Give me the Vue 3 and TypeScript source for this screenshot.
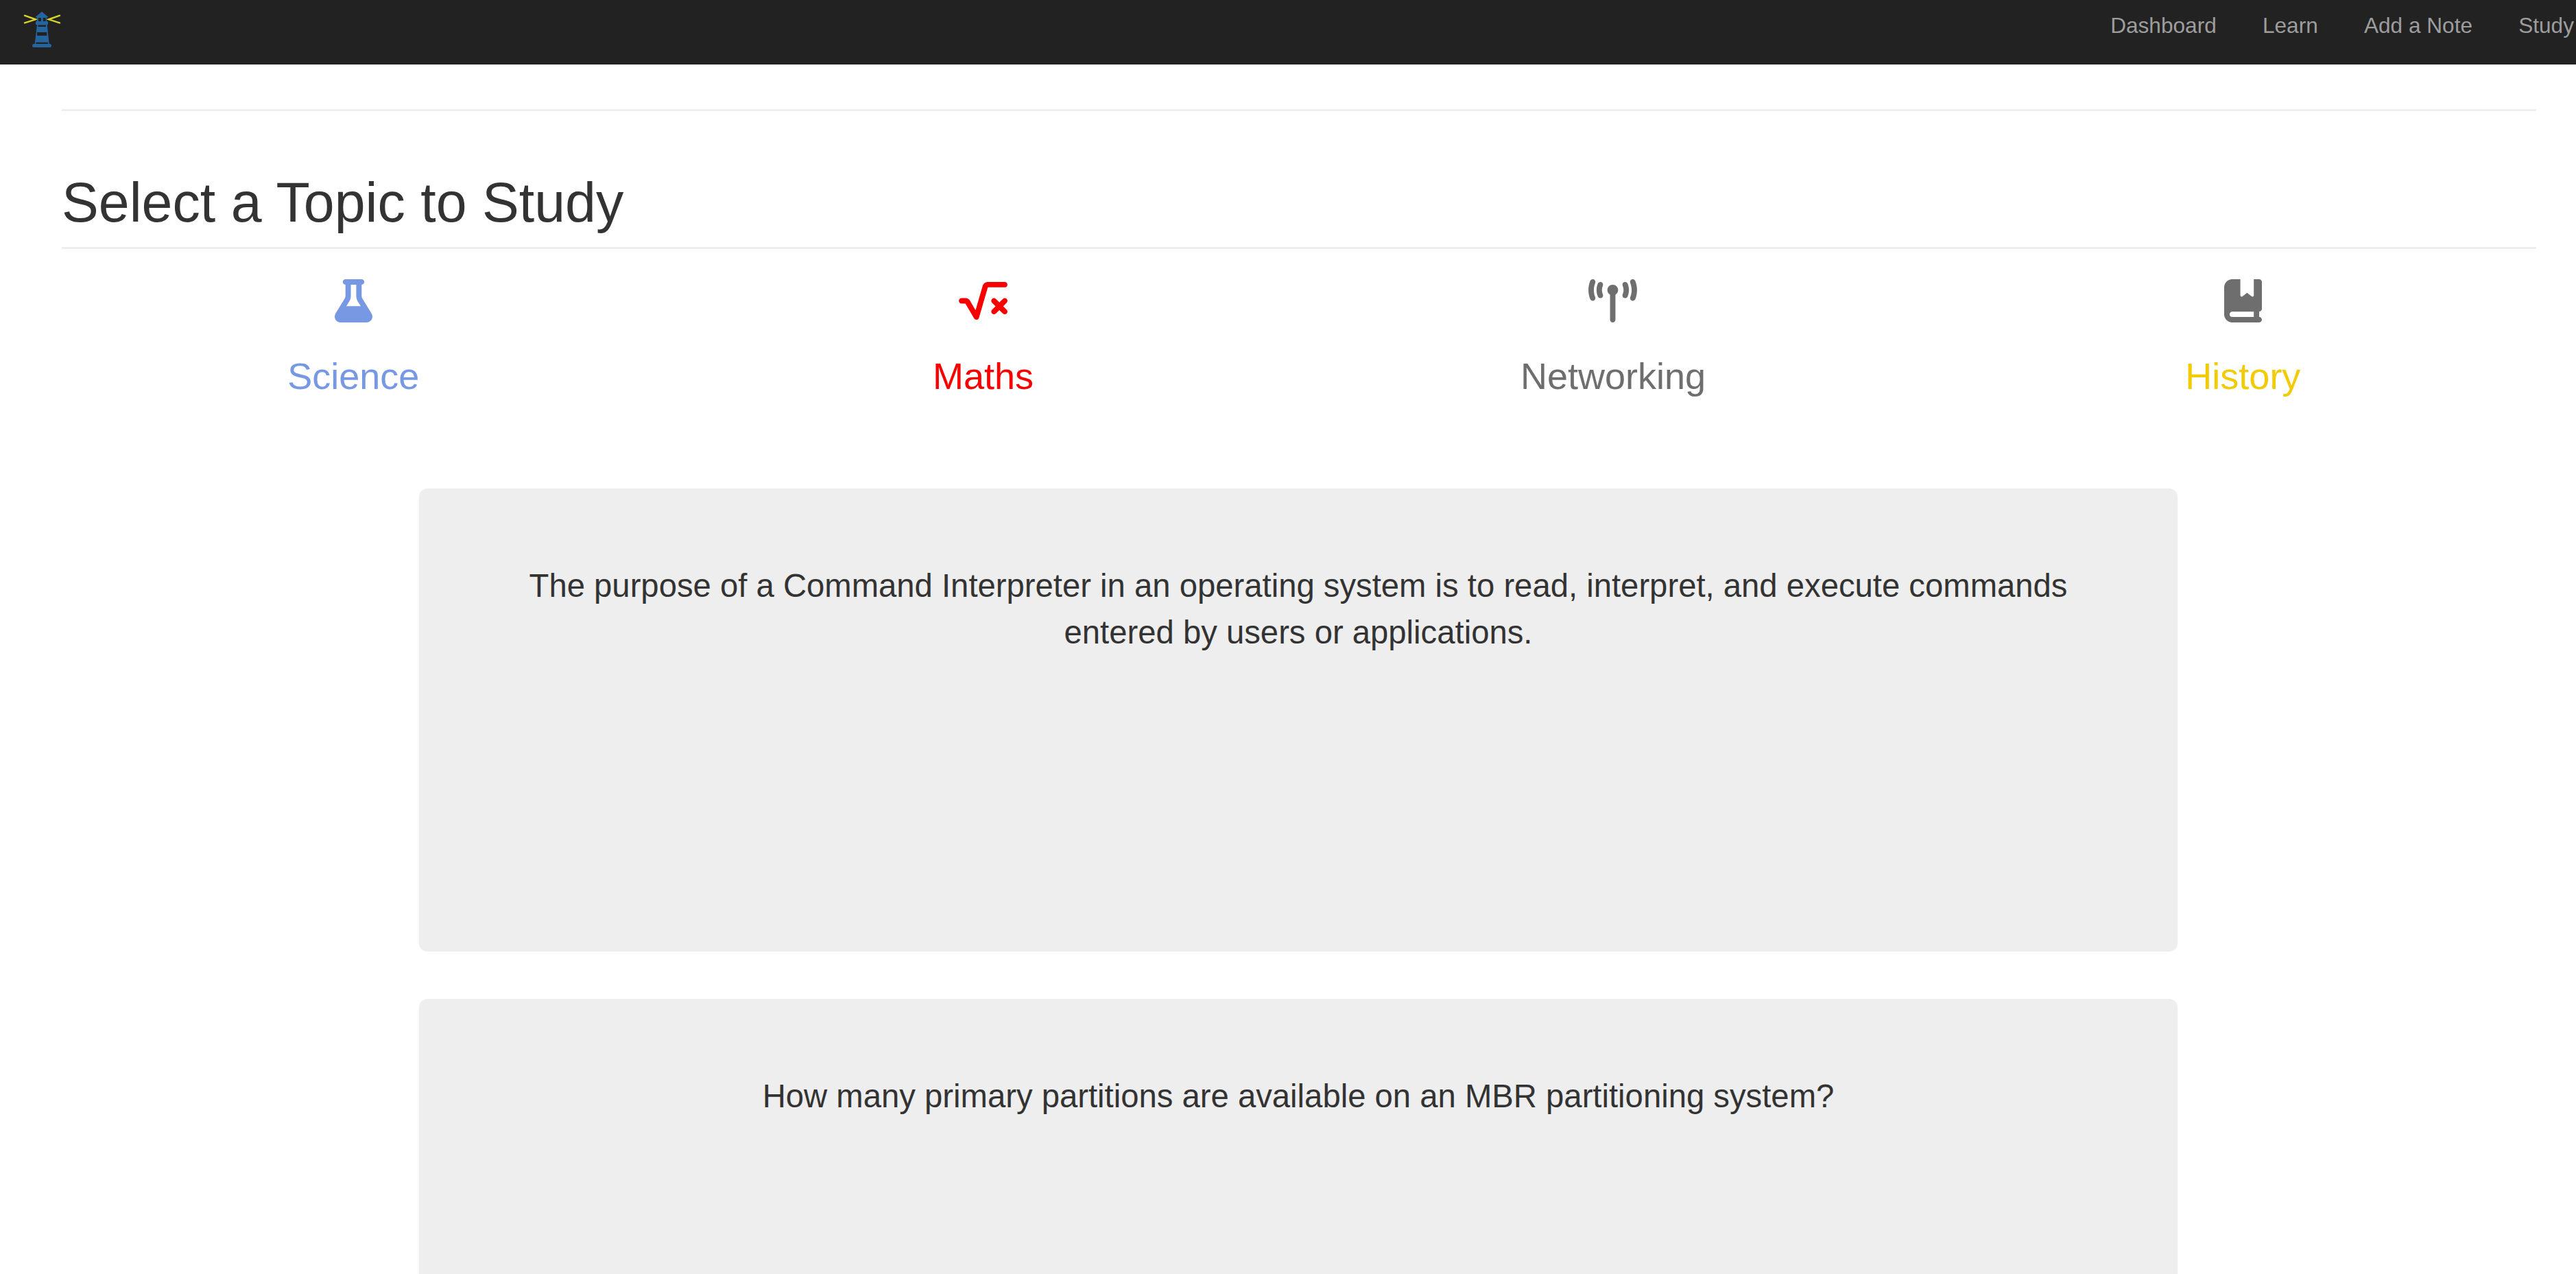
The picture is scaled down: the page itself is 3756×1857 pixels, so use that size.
<template>
  <div class="page">
    <!-- Top navbar -->
    <nav class="navbar">
      <svg class="logo" viewBox="0 0 84 72" width="84" height="72">
        <path class="rays" d="M9 13.7 L25 19.3 L9 24.3 M60 13.7 L44 19.3 L60 24.3" />
        <path class="tower" d="M34 8 L25 15.5 L25 16.5 L27 16.5 L27 22 L26 22 Q25 22 25 23 L25 26 Q25 27 26 27 L27 27 L23.7 55 L22 55 Q20 55 20 57.5 Q20 60 22 60 L46 60 Q48 60 48 57.5 Q48 55 46 55 L44.7 55 L41.7 27 L42 27 Q43 27 43 26 L43 23 Q43 22 42 22 L41 22 L41 16.5 L43 16.5 L43 15.5 Z" />
        <path class="gaps" d="M29 17 H33 V22 H29 Z M35.7 17 H39.7 V22 H35.7 Z M28.5 27.5 H40 V30 H28.5 Z M27 38 H41.3 V43 H27 Z M25.3 52.7 H43 V55 H25.3 Z" />
      </svg>
      <ul class="nav-links">
        <li v-for="link in navLinks" :key="link"><a href="#">{{ link }}</a></li>
      </ul>
    </nav>

    <main class="content">
      <hr class="rule" />
      <h1 class="page-title">Select a Topic to Study</h1>

      <div class="topics">
        <a v-for="topic in topics" :key="topic.name" href="#" class="topic" :style="{ color: topic.color }">
          <svg class="topic-icon" :viewBox="topic.viewBox" :width="topic.width" height="63">
            <path :d="topic.path" :fill="topic.iconColor" />
          </svg>
          <span class="topic-name">{{ topic.name }}</span>
        </a>
      </div>
    </main>

    <!-- Flashcards -->
    <section class="cards">
      <div v-for="card in cards" :key="card" class="card">
        <p>{{ card }}</p>
      </div>
    </section>
  </div>
</template>

<script setup lang="ts">
const navLinks: string[] = ['Dashboard', 'Learn', 'Add a Note', 'Study']

interface Topic {
  name: string
  color: string
  iconColor: string
  viewBox: string
  width: number
  path: string
}

const topics: Topic[] = [
  {
    name: 'Science',
    color: '#7799e3',
    iconColor: '#7799e3',
    viewBox: '0 0 448 512',
    width: 55,
    path: 'M288 0H160 128C110.3 0 96 14.3 96 32s14.3 32 32 32V196.8c0 11.8-3.3 23.5-9.5 33.5L10.3 406.2C3.6 417.2 0 429.7 0 442.6C0 480.9 31.1 512 69.4 512H378.6c38.3 0 69.4-31.1 69.4-69.4c0-12.8-3.6-25.4-10.3-36.4L329.5 230.4c-6.2-10.1-9.5-21.7-9.5-33.5V64c17.7 0 32-14.3 32-32s-14.3-32-32-32H288zM192 196.8V64h64V196.8c0 23.7 6.6 46.9 19 67.1L309.5 320h-171L173 263.9c12.4-20.2 19-43.4 19-67.1z'
  },
  {
    name: 'Maths',
    color: '#f80000',
    iconColor: '#f80000',
    viewBox: '0 0 576 512',
    width: 71,
    path: 'M282.6 78.1c8-27.3 33-46.1 61.4-46.1H544c17.7 0 32 14.3 32 32s-14.3 32-32 32H344L238.7 457c-3.6 12.3-14.1 21.2-26.8 22.8s-25.1-4.6-31.5-15.6L77.6 288H32c-17.7 0-32-14.3-32-32s14.3-32 32-32H77.6c22.8 0 43.8 12.1 55.3 31.8l65.2 111.8L282.6 78.1zM393.4 233.4c12.5-12.5 32.8-12.5 45.3 0L480 274.7l41.4-41.4c12.5-12.5 32.8-12.5 45.3 0s12.5 32.8 0 45.3L525.3 320l41.4 41.4c12.5 12.5 12.5 32.8 0 45.3s-32.8 12.5-45.3 0L480 365.3l-41.4 41.4c-12.5 12.5-32.8 12.5-45.3 0s-12.5-32.8 0-45.3L434.7 320l-41.4-41.4c-12.5-12.5-12.5-32.8 0-45.3z'
  },
  {
    name: 'Networking',
    color: '#6e6e6e',
    iconColor: '#6e6e6e',
    viewBox: '0 0 576 512',
    width: 71,
    path: 'M80.3 44C69.8 69.9 64 98.2 64 128s5.8 58.1 16.3 84c6.6 16.4-1.3 35-17.7 41.7s-35-1.3-41.7-17.7C7.4 202.6 0 166.1 0 128S7.4 53.4 20.9 20C27.6 3.6 46.2-4.3 62.6 2.3S86.9 27.6 80.3 44zM555.1 20C568.6 53.4 576 89.9 576 128s-7.4 74.6-20.9 108c-6.6 16.4-25.3 24.3-41.7 17.7S489.1 228.4 495.7 212c10.5-25.9 16.3-54.2 16.3-84s-5.8-58.1-16.3-84C489.1 27.6 497 9 513.4 2.3s35 1.3 41.7 17.7zM352 128c0 23.7-12.9 44.4-32 55.4V480c0 17.7-14.3 32-32 32s-32-14.3-32-32V183.4c-19.1-11.1-32-31.7-32-55.4c0-35.3 28.7-64 64-64s64 28.7 64 64zM170.6 76.8C163.8 92.4 160 109.7 160 128s3.8 35.6 10.6 51.2c7.1 16.2-.3 35.1-16.5 42.1s-35.1-.3-42.1-16.5c-10.3-23.6-16-49.6-16-76.8s5.7-53.2 16-76.8c7.1-16.2 25.9-23.6 42.1-16.5s23.6 25.9 16.5 42.1zM464 51.2c10.3 23.6 16 49.6 16 76.8s-5.7 53.2-16 76.8c-7.1 16.2-25.9 23.6-42.1 16.5s-23.6-25.9-16.5-42.1c6.8-15.6 10.6-32.9 10.6-51.2s-3.8-35.6-10.6-51.2c-7.1-16.2 .3-35.1 16.5-42.1s35.1 .3 42.1 16.5z'
  },
  {
    name: 'History',
    color: '#f2cb05',
    iconColor: '#6e6e6e',
    viewBox: '0 0 448 512',
    width: 55,
    path: 'M0 96C0 43 43 0 96 0h96V190.7c0 13.4 15.5 20.9 26 12.5L272 160l54 43.2c10.5 8.4 26 .9 26-12.5V0h32 32c17.7 0 32 14.3 32 32V352c0 17.7-14.3 32-32 32v64c17.7 0 32 14.3 32 32s-14.3 32-32 32H384 96c-53 0-96-43-96-96V96zM64 416c0 17.7 14.3 32 32 32H352V384H96c-17.7 0-32 14.3-32 32z'
  }
]

const cards: string[] = [
  'The purpose of a Command Interpreter in an operating system is to read, interpret, and execute commands entered by users or applications.',
  'How many primary partitions are available on an MBR partitioning system?'
]
</script>

<style scoped>
.page {
  font-family: "Liberation Sans", Arial, sans-serif;
  color: #333;
}

.navbar {
  height: 94px;
  background: #222;
  display: flex;
  justify-content: space-between;
  align-items: flex-start;
}

.logo {
  display: block;
  margin: 9px 0 0 27px;
}

.rays {
  fill: none;
  stroke: #d6d62c;
  stroke-width: 2.4;
  stroke-linecap: round;
  stroke-linejoin: miter;
}

.tower {
  fill: #25659f;
}

.gaps {
  fill: #222;
}

.nav-links {
  list-style: none;
  display: flex;
  gap: 67.2px;
  margin: 0;
  padding: 18px 3px 0 0;
}

.nav-links a {
  color: #9d9d9d;
  font-size: 31.6px;
  line-height: 38px;
  text-decoration: none;
}

.content {
  width: 3608px;
  margin-left: 90px;
}

.rule {
  border: 0;
  border-top: 3px solid #eee;
  margin: 65px 0 0;
}

.page-title {
  margin: 0;
  padding: 89px 0 21px;
  font-size: 80.7px;
  font-weight: 400;
  line-height: 88px;
  border-bottom: 3px solid #eee;
}

.topics {
  display: grid;
  grid-template-columns: repeat(4, 918.4px);
  margin-left: -34px;
}

.topic {
  display: flex;
  flex-direction: column;
  align-items: center;
  padding-top: 44px;
  text-decoration: none;
}

.topic-icon {
  display: block;
}

.topic-name {
  margin-top: 46px;
  font-size: 54px;
  line-height: 65px;
}

.cards {
  display: flex;
  flex-direction: column;
  gap: 69px;
  width: 2564px;
  margin: 131px 0 0 611px;
}

.card {
  height: 675px;
  box-sizing: border-box;
  padding: 108px 120px 0;
  background: #eee;
  border-radius: 12px;
  text-align: center;
}

.card p {
  margin: 0;
  font-size: 47.25px;
  line-height: 67.5px;
  color: #333;
}
</style>

<style>
html,
body {
  margin: 0;
  overflow: hidden;
  background: #fff;
}
</style>
